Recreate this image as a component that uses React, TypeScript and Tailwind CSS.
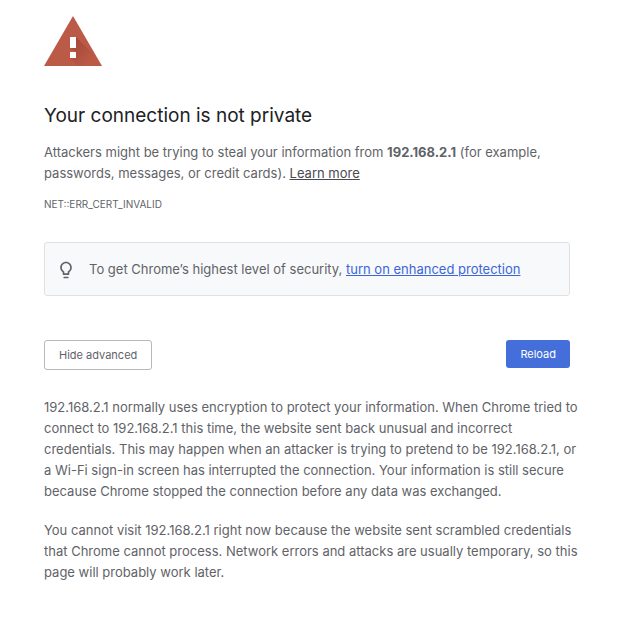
const DETAILS = [
  '192.168.2.1 normally uses encryption to protect your information. When Chrome tried to connect to 192.168.2.1 this time, the website sent back unusual and incorrect credentials. This may happen when an attacker is trying to pretend to be 192.168.2.1, or a Wi-Fi sign-in screen has interrupted the connection. Your information is still secure because Chrome stopped the connection before any data was exchanged.',
  'You cannot visit 192.168.2.1 right now because the website sent scrambled credentials that Chrome cannot process. Network errors and attacks are usually temporary, so this page will probably work later.',
]

function WarningIcon() {
  return (
    <svg viewBox="0 0 58 50" className="h-[50px] w-[58px]" aria-hidden="true">
      <defs>
        <linearGradient id="shade" x1="28" y1="28" x2="46" y2="46" gradientUnits="userSpaceOnUse">
          <stop offset="0" stopColor="#7a2a1c" stopOpacity="0.36" />
          <stop offset="1" stopColor="#7a2a1c" stopOpacity="0" />
        </linearGradient>
      </defs>
      <path d="M29 0 58 50H0Z" fill="#bc5a48" />
      <path d="M32 21 45 34 54 43 58 50H34L26 42l6-6-6-4Z" fill="url(#shade)" />
      <path d="M26 21h6v11h-6zM26 36h6v6h-6z" fill="#fff" />
    </svg>
  )
}

function BulbIcon() {
  return (
    <svg viewBox="0 0 24 24" className="size-5 shrink-0" fill="#5f6368" aria-hidden="true">
      <path d="M9 20h6v2H9zM12 2C8.14 2 5 5.14 5 9c0 2.38 1.19 4.47 3 5.74V17c0 .55.45 1 1 1h6c.55 0 1-.45 1-1v-2.26c1.81-1.27 3-3.36 3-5.74 0-3.86-3.14-7-7-7zm2.85 11.1-.85.6V16h-4v-2.3l-.85-.6A4.997 4.997 0 0 1 7 9c0-2.76 2.24-5 5-5s5 2.24 5 5c0 1.63-.8 3.16-2.15 4.1z" />
    </svg>
  )
}

export default function App() {
  return (
    <main className="min-h-screen bg-white px-11 pt-4 font-['Inter',sans-serif] text-[13px] leading-[21px] text-[#5f6368]">
      <div className="max-w-[526px]">
        <WarningIcon />
        <h1 className="mt-9 text-[19px] leading-7 text-[#202124]">
          Your connection is not private
        </h1>
        <p className="mt-3">
          Attackers might be trying to steal your information from <strong>192.168.2.1</strong> (for
          example, passwords, messages, or credit cards).{' '}
          <a href="#learn-more" className="text-[#484b4f] underline">
            Learn more
          </a>
        </p>
        <p className="mt-3 text-[10px] leading-4">NET::ERR_CERT_INVALID</p>

        <div className="mt-[30px] flex items-center gap-[13px] rounded-[3px] border border-[#dfe1e5] bg-[#f8f9fb] px-[11px] pt-4 pb-[15px]">
          <BulbIcon />
          <p>
            To get Chrome’s highest level of security,{' '}
            <a href="#enhanced-protection" className="text-[#3b66d9] underline">
              turn on enhanced protection
            </a>
          </p>
        </div>

        <div className="mt-11 flex items-start justify-between">
          <button
            type="button"
            className="rounded-[3px] border border-[#b4b9bd] px-3.5 py-1 text-[11px] leading-5"
          >
            Hide advanced
          </button>
          <button
            type="button"
            className="rounded-[3px] bg-[#446fdb] px-3.5 py-1 text-[11px] leading-5 text-white"
          >
            Reload
          </button>
        </div>

        <div className="-mr-3 mt-[27px] space-y-[18px]">
          {DETAILS.map((text) => (
            <p key={text}>{text}</p>
          ))}
        </div>
      </div>
    </main>
  )
}
